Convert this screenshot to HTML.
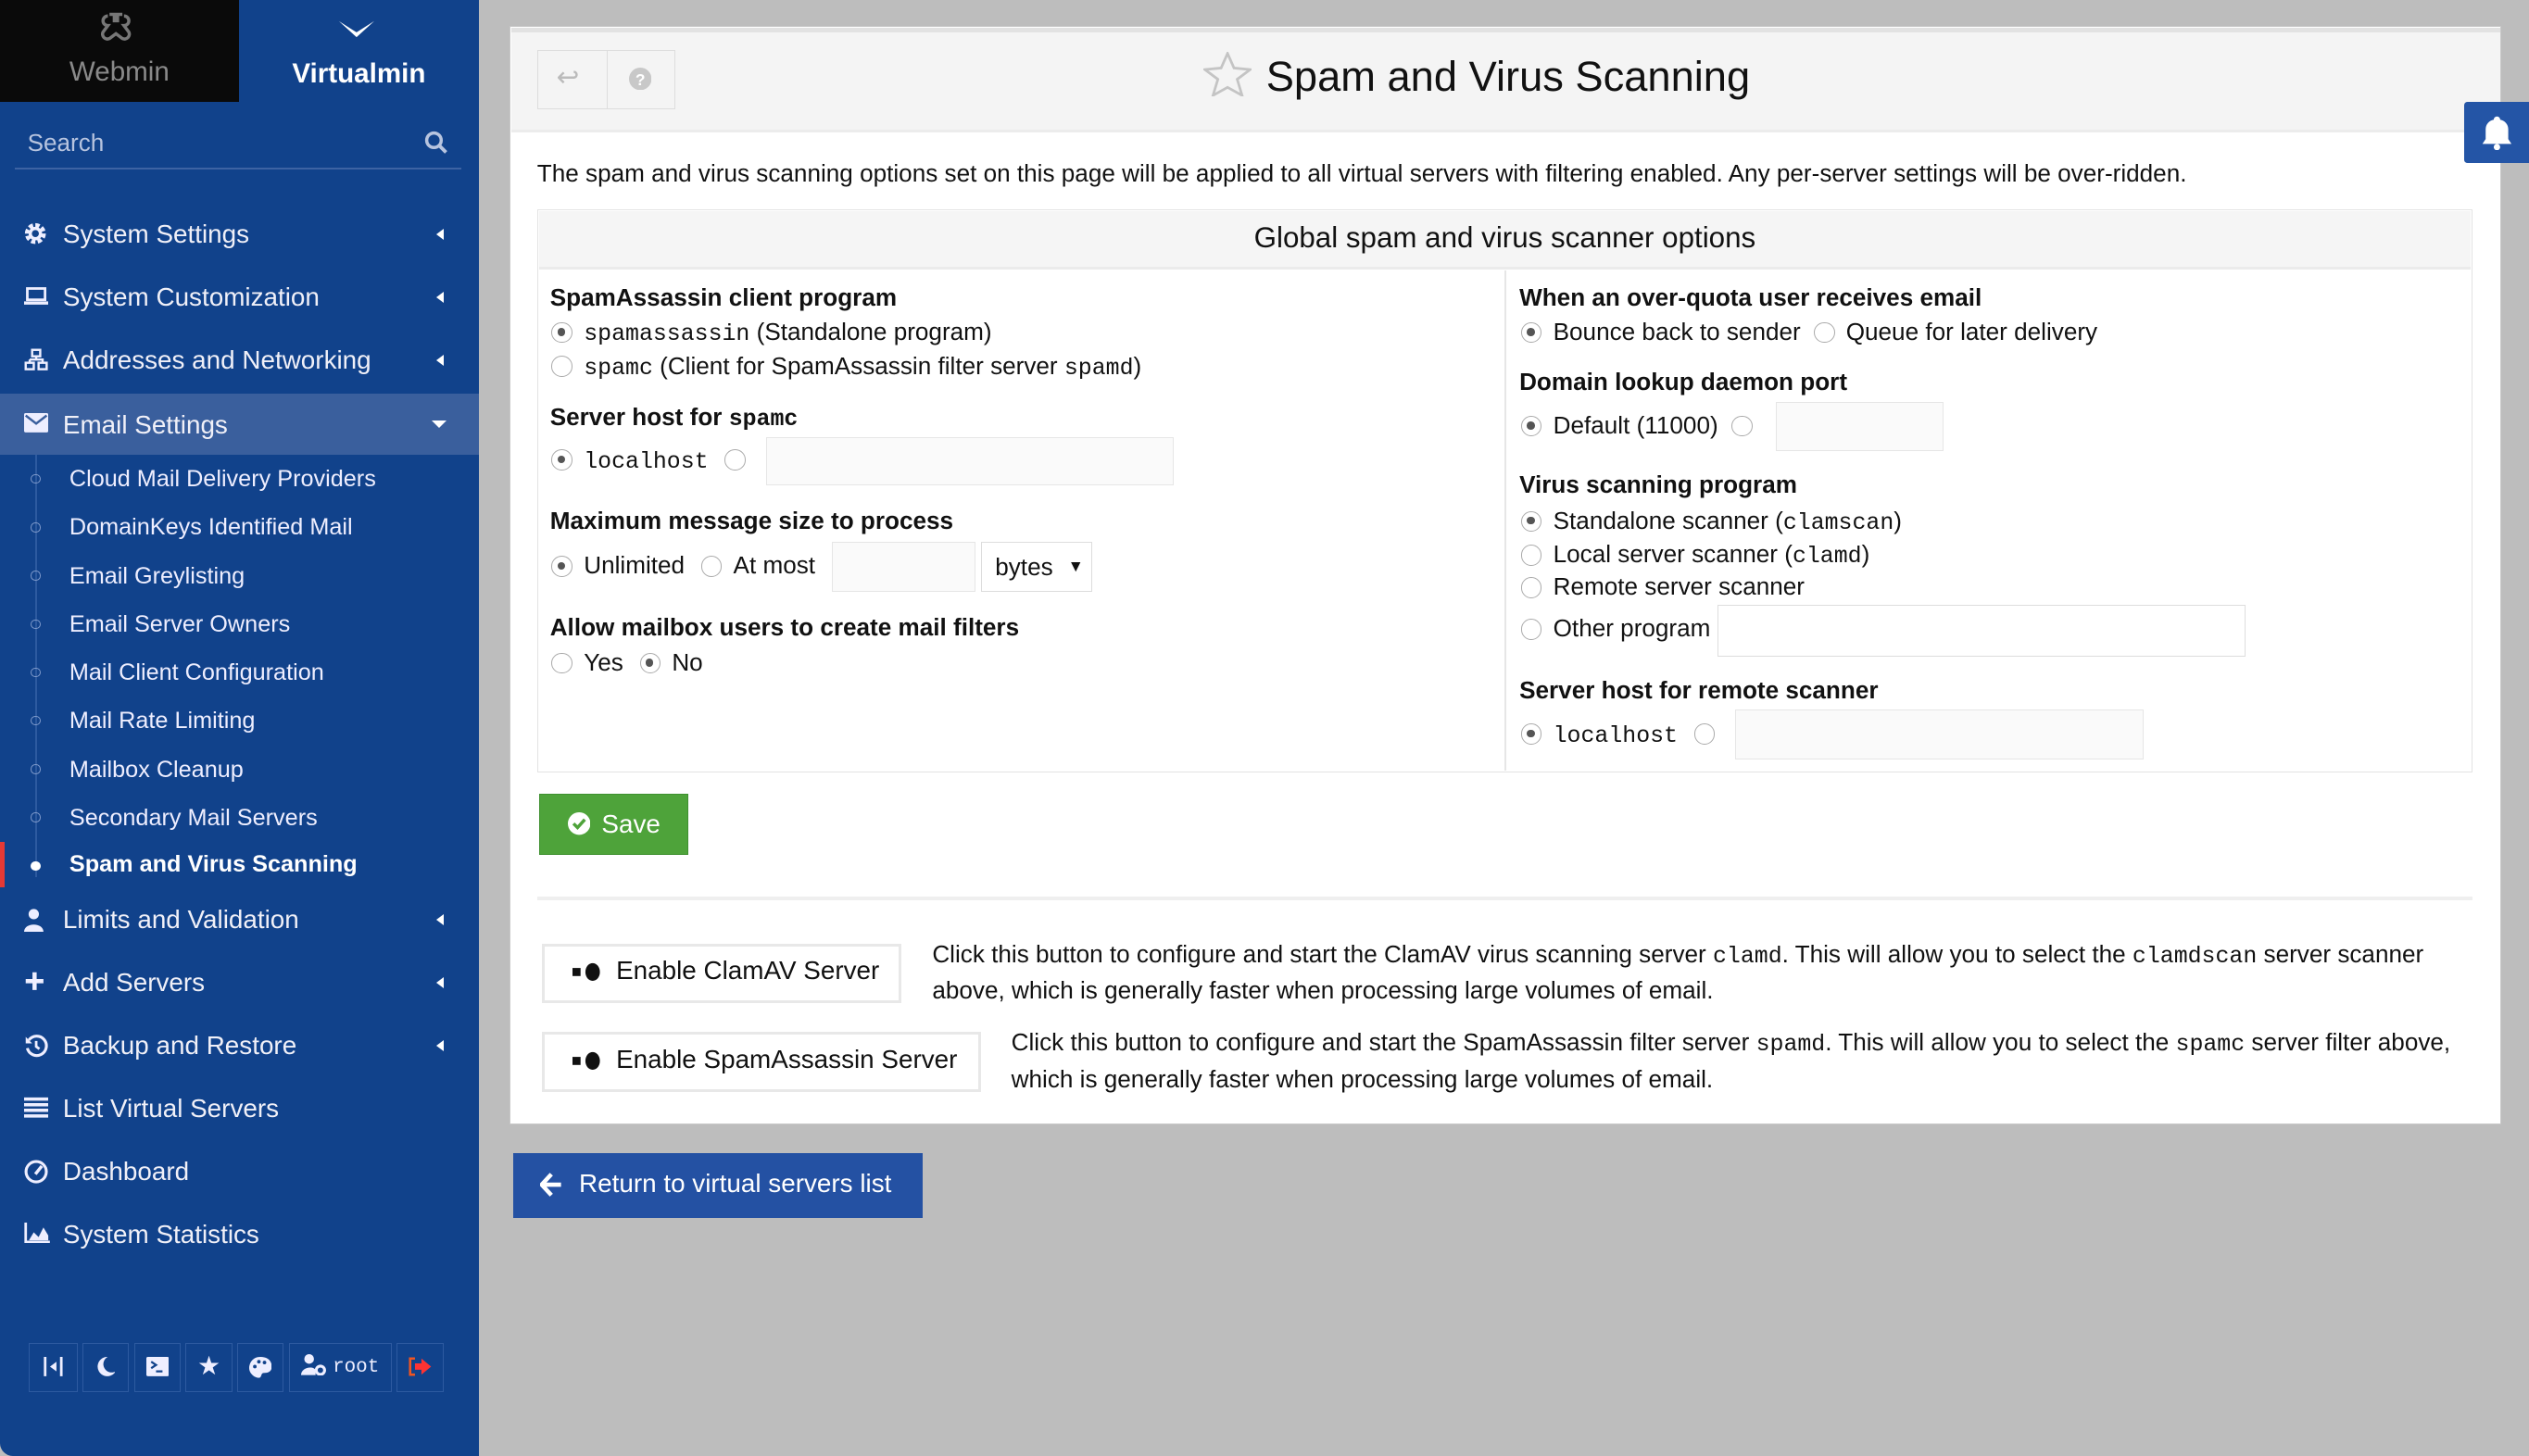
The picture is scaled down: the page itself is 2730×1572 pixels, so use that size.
<!DOCTYPE html>
<html><head><meta charset="utf-8"><style>
*{box-sizing:border-box;margin:0;padding:0}
html,body{width:2730px;height:1572px;overflow:hidden;background:#bdbdbd}
#w{zoom:1.74107;width:1568px;height:903px;position:relative;font-family:"Liberation Sans",sans-serif;color:#111;letter-spacing:0}
.a{position:absolute;white-space:nowrap}
#sb{position:absolute;left:0;top:0;width:297px;height:903px;background:#11428b;border-bottom-left-radius:8px}
.mi{position:absolute;left:0;width:297px;height:39px;color:#f0f0f8;font-size:16px;line-height:39px;padding-left:39px}
.mi svg{position:absolute;left:15px;top:12px}
.car{position:absolute;right:22px;top:16px;width:0;height:0;border-top:4px solid transparent;border-bottom:4px solid transparent;border-right:5px solid #fff}
.sub{position:absolute;left:43px;color:#eef;font-size:14.5px}
.dot{position:absolute;left:19px;width:6px;height:6px;border:1px solid #7f9acb;border-radius:50%}
.ib{position:absolute;top:833px;height:30px;border:1px solid #2d5aa0;color:#eef;font-size:12px;text-align:center;line-height:28px}
.r{display:inline-block;width:13px;height:13px;border:1px solid #aaa;border-radius:50%;vertical-align:-2px;margin-right:7px;position:relative;background:#fff}
.r.c::after{content:"";position:absolute;left:3px;top:3px;width:5px;height:5px;border-radius:50%;background:#555}
.t{font-size:15px}
.b{font-size:15px;font-weight:bold}
.m{font-family:"Liberation Mono",monospace;font-size:14.3px}
.in{position:absolute;background:#fafafa;border:1px solid #e6e6e6}
</style></head><body><div id="w">
<div id="sb">
 <div class="a" style="left:0;top:0;width:148px;height:63px;background:#0a0a0a"></div>
 <svg class="a" style="left:61px;top:7px" width="22" height="20" viewBox="0 0 22 20"><path d="M7 2h3v5M15 2h-3v5M6 3a3 3 0 0 0 0 6l-3 4a3 3 0 0 0 4 4l4-3 4 3a3 3 0 0 0 4-4l-3-4a3 3 0 0 0 0-6" fill="none" stroke="#777" stroke-width="2"/></svg>
 <div class="a" style="left:0;width:148px;top:35px;text-align:center;color:#8a8a8a;font-size:17px">Webmin</div>
 <svg class="a" style="left:209px;top:12px" width="24" height="12" viewBox="0 0 24 12"><path d="M1 1l11 7 11-7-11 10z" fill="#fff"/></svg>
 <div class="a" style="left:148px;width:149px;top:36px;text-align:center;color:#fff;font-size:17px;font-weight:bold">Virtualmin</div>
 <div class="a" style="left:17px;top:80px;color:#b7c4df;font-size:15px">Search</div>
 <svg class="a" style="left:263px;top:81px" width="15" height="15" viewBox="0 0 15 15"><circle cx="6" cy="6" r="4.5" fill="none" stroke="#b7c4df" stroke-width="2"/><path d="M9.5 9.5l4 4" stroke="#b7c4df" stroke-width="2.2"/></svg>
 <div class="a" style="left:9px;top:104px;width:277px;height:1px;background:#3d63a3"></div>
 <div class="mi" style="top:126px"><svg width="14" height="14" viewBox="0 0 14 14"><circle cx="7" cy="7" r="5" fill="none" stroke="#eef" stroke-width="3" stroke-dasharray="2.5 1.4"/><circle cx="7" cy="7" r="3.2" fill="none" stroke="#eef" stroke-width="2"/></svg>System Settings<span class="car"></span></div>
 <div class="mi" style="top:165px"><svg width="15" height="13" viewBox="0 0 15 13"><rect x="2" y="2" width="11" height="7" fill="none" stroke="#eef" stroke-width="1.6"/><rect x="0" y="10" width="15" height="2" fill="#eef"/></svg>System Customization<span class="car"></span></div>
 <div class="mi" style="top:204px"><svg width="15" height="14" viewBox="0 0 15 14"><g fill="none" stroke="#eef" stroke-width="1.4"><rect x="5" y="1" width="5" height="4"/><rect x="1" y="9" width="5" height="4"/><rect x="9" y="9" width="5" height="4"/><path d="M7.5 5v2M3.5 7h8v2M3.5 7v2"/></g></svg>Addresses and Networking<span class="car"></span></div>
 <div class="mi" style="top:244px;height:38px;background:#3a5f9d"><svg width="15" height="12" viewBox="0 0 15 12"><rect width="15" height="12" rx="1" fill="#eef"/><path d="M1 1.5l6.5 5 6.5-5" fill="none" stroke="#3a5f9d" stroke-width="1.4"/></svg>Email Settings<span class="car" style="border:none;border-left:5px solid transparent;border-right:5px solid transparent;border-top:5px solid #fff;top:17px;right:20px"></span></div>
 <div class="a" style="left:22px;top:282px;width:1px;height:262px;background:#2d5aa0"></div>
 <div class="dot" style="top:294px"></div><div class="sub" style="top:289px">Cloud Mail Delivery Providers</div>
 <div class="dot" style="top:324px"></div><div class="sub" style="top:319px">DomainKeys Identified Mail</div>
 <div class="dot" style="top:354px"></div><div class="sub" style="top:349px">Email Greylisting</div>
 <div class="dot" style="top:384px"></div><div class="sub" style="top:379px">Email Server Owners</div>
 <div class="dot" style="top:414px"></div><div class="sub" style="top:409px">Mail Client Configuration</div>
 <div class="dot" style="top:444px"></div><div class="sub" style="top:439px">Mail Rate Limiting</div>
 <div class="dot" style="top:474px"></div><div class="sub" style="top:469px">Mailbox Cleanup</div>
 <div class="dot" style="top:504px"></div><div class="sub" style="top:499px">Secondary Mail Servers</div>
 <div class="a" style="left:0;top:522px;width:3px;height:28px;background:#e53935"></div>
 <div class="dot" style="top:534px;background:#fff;border-color:#fff"></div><div class="sub" style="top:528px;font-weight:bold;color:#fff">Spam and Virus Scanning</div>
 <div class="mi" style="top:551px"><svg width="14" height="15" viewBox="0 0 14 15"><circle cx="6" cy="4" r="3.2" fill="#eef"/><path d="M0 15c0-6 12-6 12 0z" fill="#eef"/></svg>Limits and Validation<span class="car"></span></div>
 <div class="mi" style="top:590px"><svg width="13" height="13" viewBox="0 0 13 13"><path d="M6.5 1v11M1 6.5h11" stroke="#eef" stroke-width="2.6"/></svg>Add Servers<span class="car"></span></div>
 <div class="mi" style="top:629px"><svg width="15" height="15" viewBox="0 0 15 15"><path d="M3 4a6 6 0 1 1-1 5" fill="none" stroke="#eef" stroke-width="1.8"/><path d="M1 2v4h4z" fill="#eef"/><path d="M7.5 4.5v3.5l2 1.5" fill="none" stroke="#eef" stroke-width="1.6"/></svg>Backup and Restore<span class="car"></span></div>
 <div class="mi" style="top:668px"><svg width="15" height="13" viewBox="0 0 15 13"><path d="M0 1.5h15M0 5h15M0 8.5h15M0 12h15" stroke="#eef" stroke-width="2"/></svg>List Virtual Servers</div>
 <div class="mi" style="top:707px"><svg width="15" height="15" viewBox="0 0 15 15"><circle cx="7.5" cy="7.5" r="6.3" fill="none" stroke="#eef" stroke-width="1.8"/><path d="M7 9l4-5" stroke="#eef" stroke-width="2"/></svg>Dashboard</div>
 <div class="mi" style="top:746px"><svg width="16" height="13" viewBox="0 0 16 13"><path d="M1 0v12h15" fill="none" stroke="#eef" stroke-width="1.6"/><path d="M3 11l3-5 3 3 3-6 3 5v3z" fill="#eef"/></svg>System Statistics</div>
 <div class="ib" style="left:18px;width:30px"><svg width="12" height="12" viewBox="0 0 12 12" style="margin-top:8px"><path d="M1 0v12M11 0v12" stroke="#eef" stroke-width="1.6"/><path d="M8 3v6L4 6z" fill="#eef"/></svg></div>
 <div class="ib" style="left:51px;width:29px"><svg width="12" height="12" viewBox="0 0 12 12" style="margin-top:8px"><path d="M7 0a6 6 0 1 0 5 9A5 5 0 0 1 7 0z" fill="#eef"/></svg></div>
 <div class="ib" style="left:83px;width:29px"><svg width="14" height="12" viewBox="0 0 14 12" style="margin-top:8px"><rect width="14" height="12" rx="1" fill="#eef"/><path d="M3 3l3 2-3 2M6 9h4" stroke="#11428b" stroke-width="1.3" fill="none"/></svg></div>
 <div class="ib" style="left:115px;width:29px;font-size:16px;line-height:27px">★</div>
 <div class="ib" style="left:147px;width:29px"><svg width="14" height="13" viewBox="0 0 14 13" style="margin-top:8px"><path d="M7 0C2 0 0 4 0 7c0 3 3 6 6 6 2 0 1-3 3-3 3 0 5-1 5-4 0-4-3-6-7-6z" fill="#eef"/><circle cx="3.5" cy="6" r="1.1" fill="#11428b"/><circle cx="6" cy="3" r="1.1" fill="#11428b"/><circle cx="9.5" cy="3.5" r="1.1" fill="#11428b"/></svg></div>
 <div class="ib" style="left:179px;width:64px"><svg width="16" height="13" viewBox="0 0 16 13" style="vertical-align:-2px"><circle cx="5" cy="3" r="3" fill="#eef"/><path d="M0 13c0-5 8-6 9-3v3z" fill="#eef"/><circle cx="12" cy="10" r="2.6" fill="none" stroke="#eef" stroke-width="1.8"/></svg> <span class="m" style="font-size:12px">root</span></div>
 <div class="ib" style="left:246px;width:29px"><svg width="14" height="12" viewBox="0 0 14 12" style="margin-top:8px"><path d="M4 1H1v10h3" fill="none" stroke="#e52" stroke-width="1.5"/><path d="M4 4h4V1l6 5-6 5V8H4z" fill="#f33"/></svg></div>
</div>

<div class="a" style="left:316px;top:16px;width:1235px;height:681px;background:#fff;border:1px solid #c8c8c8"></div>
<div class="a" style="left:317px;top:17px;width:1233px;height:65px;background:#f4f4f4;border-top:3px solid #e2e2e2;border-bottom:2px solid #ececec"></div>
<div class="a" style="left:333px;top:31px;width:86px;height:37px;border:1px solid #ddd"></div>
<div class="a" style="left:376px;top:31px;width:1px;height:37px;background:#ddd"></div>
<div class="a" style="left:345px;top:38px;color:#bbb;font-size:17px">↩</div>
<svg class="a" style="left:390px;top:42px" width="14" height="14" viewBox="0 0 14 14"><circle cx="7" cy="7" r="7" fill="#c8c8c8"/><text x="7" y="11" text-anchor="middle" font-size="10" font-weight="bold" fill="#fff" font-family="Liberation Sans">?</text></svg>
<svg class="a" style="left:746px;top:32px" width="30" height="28" viewBox="0 0 30 28"><path d="M15 1l4 9 10 1-8 6 3 10-9-5-9 5 3-10-8-6 10-1z" fill="none" stroke="#c4c4c4" stroke-width="1.6"/></svg>
<div class="a" style="left:785px;top:33px;font-size:26px;color:#111">Spam and Virus Scanning</div>
<div class="a" style="left:1528px;top:63px;width:40px;height:38px;background:#2455a6;border-radius:2px 0 0 2px"></div>
<svg class="a" style="left:1538px;top:71px" width="20" height="22" viewBox="0 0 20 22"><path d="M10 1a2 2 0 0 1 2 2 6 6 0 0 1 5 6v6l2 3H1l2-3V9a6 6 0 0 1 5-6 2 2 0 0 1 2-2z" fill="#fff"/><circle cx="10" cy="20" r="2" fill="#fff"/></svg>

<div class="a t" style="left:333px;top:99px">The spam and virus scanning options set on this page will be applied to all virtual servers with filtering enabled. Any per-server settings will be over-ridden.</div>

<div class="a" style="left:333px;top:130px;width:1200px;height:349px;border:1px solid #e3e3e3"></div>
<div class="a" style="left:334px;top:131px;width:1198px;height:36px;background:#f5f5f5;border-bottom:2px solid #ebebeb"></div>
<div class="a" style="left:333px;width:1200px;top:137px;text-align:center;font-size:18px">Global spam and virus scanner options</div>
<div class="a" style="left:933px;top:168px;width:1px;height:310px;background:#e6e6e6"></div>

<div class="a b" style="left:341px;top:176px">SpamAssassin client program</div>
<div class="a t" style="left:342px;top:197px"><span class="r c"></span><span class="m">spamassassin</span> (Standalone program)</div>
<div class="a t" style="left:342px;top:218px"><span class="r"></span><span class="m">spamc</span> (Client for SpamAssassin filter server <span class="m">spamd</span>)</div>
<div class="a b" style="left:341px;top:250px">Server host for <span class="m">spamc</span></div>
<div class="a t" style="left:342px;top:276px"><span class="r c"></span><span class="m">localhost</span> <span class="r" style="margin-left:6px"></span></div>
<div class="in" style="left:475px;top:271px;width:253px;height:30px"></div>
<div class="a b" style="left:341px;top:314px">Maximum message size to process</div>
<div class="a t" style="left:342px;top:342px"><span class="r c"></span>Unlimited <span class="r" style="margin-left:6px"></span>At most</div>
<div class="in" style="left:516px;top:336px;width:89px;height:31px"></div>
<div class="in" style="left:608px;top:336px;width:69px;height:31px;background:#fff;border-color:#ddd"></div>
<div class="a t" style="left:617px;top:343px">bytes</div>
<div class="a" style="left:662px;top:345px;font-size:10px">▼</div>
<div class="a b" style="left:341px;top:380px">Allow mailbox users to create mail filters</div>
<div class="a t" style="left:342px;top:402px"><span class="r"></span>Yes <span class="r c" style="margin-left:6px"></span>No</div>

<div class="a b" style="left:942px;top:176px">When an over-quota user receives email</div>
<div class="a t" style="left:943px;top:197px"><span class="r c"></span>Bounce back to sender <span class="r" style="margin-left:4px"></span>Queue for later delivery</div>
<div class="a b" style="left:942px;top:228px">Domain lookup daemon port</div>
<div class="a t" style="left:943px;top:255px"><span class="r c"></span>Default (11000) <span class="r" style="margin-left:4px"></span></div>
<div class="in" style="left:1101px;top:249px;width:104px;height:31px"></div>
<div class="a b" style="left:942px;top:292px">Virus scanning program</div>
<div class="a t" style="left:943px;top:314px"><span class="r c"></span>Standalone scanner (<span class="m">clamscan</span>)</div>
<div class="a t" style="left:943px;top:335px"><span class="r"></span>Local server scanner (<span class="m">clamd</span>)</div>
<div class="a t" style="left:943px;top:355px"><span class="r"></span>Remote server scanner</div>
<div class="a t" style="left:943px;top:381px"><span class="r"></span>Other program</div>
<div class="in" style="left:1065px;top:375px;width:327px;height:32px;background:#fff;border-color:#ddd"></div>
<div class="a b" style="left:942px;top:419px">Server host for remote scanner</div>
<div class="a t" style="left:943px;top:446px"><span class="r c"></span><span class="m">localhost</span> <span class="r" style="margin-left:6px"></span></div>
<div class="in" style="left:1076px;top:440px;width:253px;height:31px"></div>

<div class="a" style="left:334px;top:492px;width:93px;height:38px;background:#4ea33a;border:1px solid #3f9030"></div>
<svg class="a" style="left:352px;top:504px" width="14" height="14" viewBox="0 0 14 14"><circle cx="7" cy="7" r="7" fill="#fff"/><path d="M3.5 7l2.5 2.5 4.5-5" fill="none" stroke="#4ea33a" stroke-width="2"/></svg>
<div class="a" style="left:373px;top:502px;color:#fff;font-size:16px">Save</div>

<div class="a" style="left:333px;top:556px;width:1200px;height:2px;background:#efefef"></div>

<div class="a" style="left:336px;top:585px;width:223px;height:37px;border:2px solid #e8e8e8;background:#fff"></div>
<svg class="a" style="left:355px;top:597px" width="18" height="12" viewBox="0 0 18 12"><rect x="0" y="3.5" width="5" height="5" fill="#111"/><ellipse cx="12.5" cy="6" rx="4.5" ry="5.5" fill="#111"/></svg>
<div class="a" style="left:382px;top:593px;font-size:16px">Enable ClamAV Server</div>
<div class="a t" style="left:578px;top:581px;line-height:21px">Click this button to configure and start the ClamAV virus scanning server <span class="m">clamd</span>. This will allow you to select the <span class="m">clamdscan</span> server scanner<br>above, which is generally faster when processing large volumes of email.</div>
<div class="a" style="left:336px;top:640px;width:272px;height:37px;border:2px solid #e8e8e8;background:#fff"></div>
<svg class="a" style="left:355px;top:652px" width="18" height="12" viewBox="0 0 18 12"><rect x="0" y="3.5" width="5" height="5" fill="#111"/><ellipse cx="12.5" cy="6" rx="4.5" ry="5.5" fill="#111"/></svg>
<div class="a" style="left:382px;top:648px;font-size:16px">Enable SpamAssassin Server</div>
<div class="a t" style="left:627px;top:636px;line-height:21px">Click this button to configure and start the SpamAssassin filter server <span class="m">spamd</span>. This will allow you to select the <span class="m">spamc</span> server filter above,<br>which is generally faster when processing large volumes of email.</div>

<div class="a" style="left:318px;top:715px;width:254px;height:40px;background:#2451a3"></div>
<svg class="a" style="left:335px;top:727px" width="14" height="15" viewBox="0 0 14 15"><path d="M7 1L1 7.5 7 14M1.5 7.5H13" fill="none" stroke="#fff" stroke-width="2.6"/></svg>
<div class="a" style="left:359px;top:725px;color:#fff;font-size:16px">Return to virtual servers list</div>
</div></body></html>
